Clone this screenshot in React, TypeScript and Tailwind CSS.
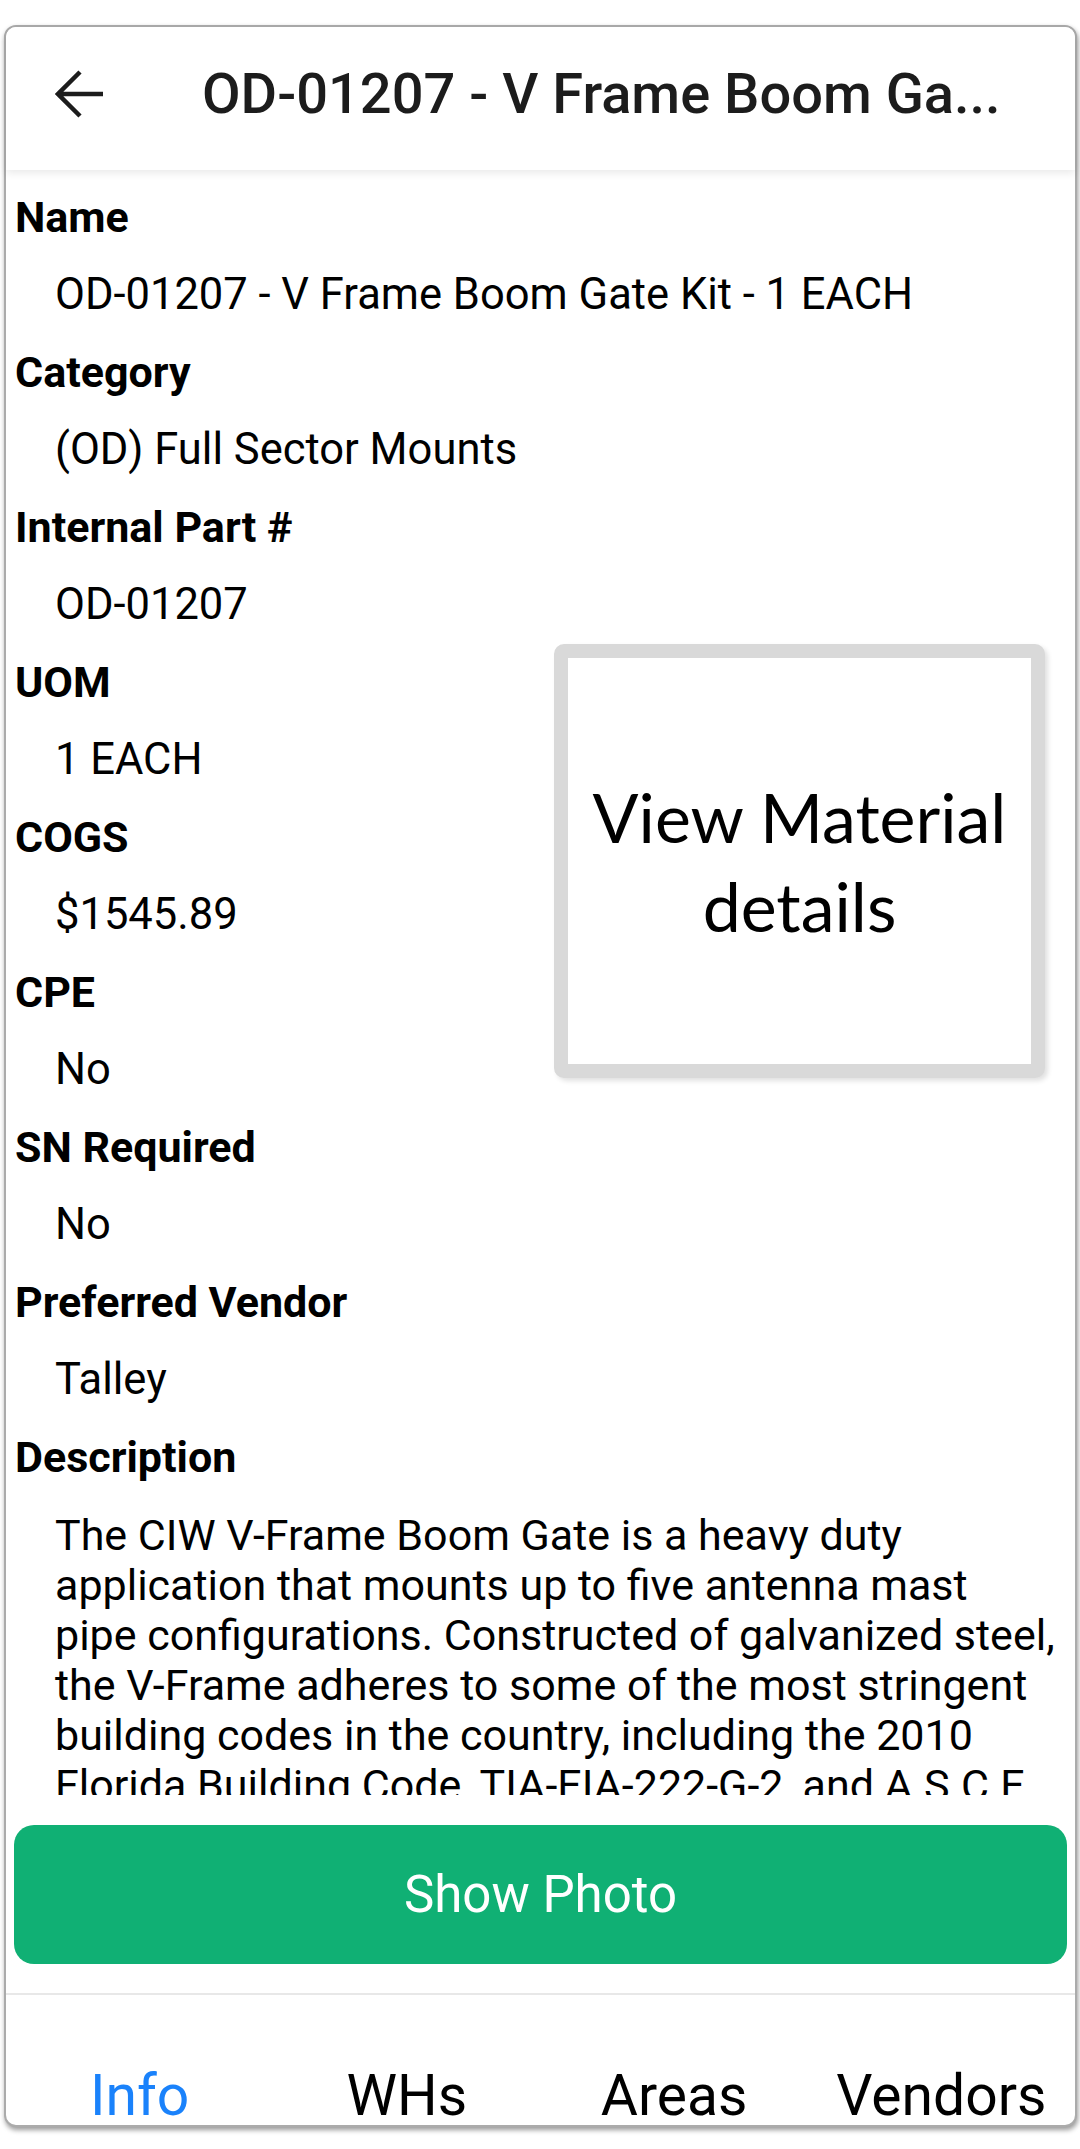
import React from "react";

const fields = [
  { label: "Name", value: "OD-01207 - V Frame Boom Gate Kit - 1 EACH" },
  { label: "Category", value: "(OD) Full Sector Mounts" },
  { label: "Internal Part #", value: "OD-01207" },
];

const boxFields = [
  { label: "UOM", value: "1 EACH" },
  { label: "COGS", value: "$1545.89" },
  { label: "CPE", value: "No" },
];

const moreFields = [
  { label: "SN Required", value: "No" },
  { label: "Preferred Vendor", value: "Talley" },
];

// wrapped the same way the device wraps it
const descriptionLines = [
  "The CIW V-Frame Boom Gate is a heavy duty",
  "application that mounts up to five antenna mast",
  "pipe configurations. Constructed of galvanized steel,",
  "the V-Frame adheres to some of the most stringent",
  "building codes in the country, including the 2010",
  "Florida Building Code, TIA-EIA-222-G-2, and A.S.C.E.",
  "7-05.",
];

function Field({ label, value }: { label: string; value: string }) {
  return (
    <div>
      <div className="pl-[9px] text-[43px] font-bold leading-[77px] text-black whitespace-nowrap">{label}</div>
      <div className="pl-[49px] text-[43.5px] leading-[78px] text-black whitespace-nowrap">{value}</div>
    </div>
  );
}

function BackArrow() {
  return (
    <svg width="50" height="48" viewBox="0 0 50 48" fill="none">
      <path d="M48 24H4 M25 2 L3 24 L25 46" stroke="#1c1c1c" strokeWidth="4.5" strokeLinejoin="miter" />
    </svg>
  );
}

export default function App() {
  return (
    <div className="w-[1080px] h-[2149px] bg-white pt-[25px] font-['Roboto',sans-serif]">
      <div className="ml-[4px] w-[1073px] h-[2102px] flex flex-col rounded-[12px] border-2 border-[#ababab] bg-white shadow-[1px_3px_5px_rgba(0,0,0,0.4)]">
        <div className="relative z-10 h-[143px] shrink-0 flex items-center pb-[10px] rounded-t-[10px] bg-white shadow-[0_3px_8px_rgba(0,0,0,0.09)]">
          <div className="ml-[49px] shrink-0">
            <BackArrow />
          </div>
          <div className="ml-[97px] text-[56px] font-medium leading-[64px] text-[#1c1c1c] whitespace-nowrap">
            OD-01207 - V Frame Boom Ga...
          </div>
        </div>

        <div className="h-[1625px] shrink-0 overflow-hidden pt-[9px]">
          {fields.map((f) => (
            <Field key={f.label} {...f} />
          ))}
          <div className="flex">
            <div className="flex-1">
              {boxFields.map((f) => (
                <Field key={f.label} {...f} />
              ))}
            </div>
            <div className="mr-[30px] w-[491px] h-[434px] rounded-[10px] border-[14px] border-[#d9d9d9] bg-white shadow-[3px_3px_5px_rgba(0,0,0,0.12)] flex items-center justify-center">
              <div className="text-center text-[68px] leading-[89px] text-black font-['Lato',sans-serif]">
                View Material
                <br />
                details
              </div>
            </div>
          </div>
          {moreFields.map((f) => (
            <Field key={f.label} {...f} />
          ))}
          <div className="pl-[9px] text-[43px] font-bold leading-[77px] text-black">Description</div>
          <div className="pl-[49px] pt-[14px] text-[43px] leading-[50px] text-black">
            {descriptionLines.map((line) => (
              <div key={line} className="whitespace-nowrap">
                {line}
              </div>
            ))}
          </div>
        </div>

        <div className="shrink-0 px-[8px] pt-[30px] pb-[29px]">
          <button className="w-full h-[139px] rounded-[20px] bg-[#10b074] text-white text-[51px] leading-[60px]">
            Show Photo
          </button>
        </div>
        <div className="h-[2px] shrink-0 bg-[#e8e8e8]" />

        <div className="flex-1 flex items-end pb-[1px]">
          {["Info", "WHs", "Areas", "Vendors"].map((t, i) => (
            <div
              key={t}
              className={
                i === 0
                  ? "flex-1 text-center text-[57px] leading-[56px] text-[#1a82fb]"
                  : "flex-1 text-center text-[57px] leading-[56px] text-black"
              }
            >
              {t}
            </div>
          ))}
        </div>
      </div>
    </div>
  );
}
